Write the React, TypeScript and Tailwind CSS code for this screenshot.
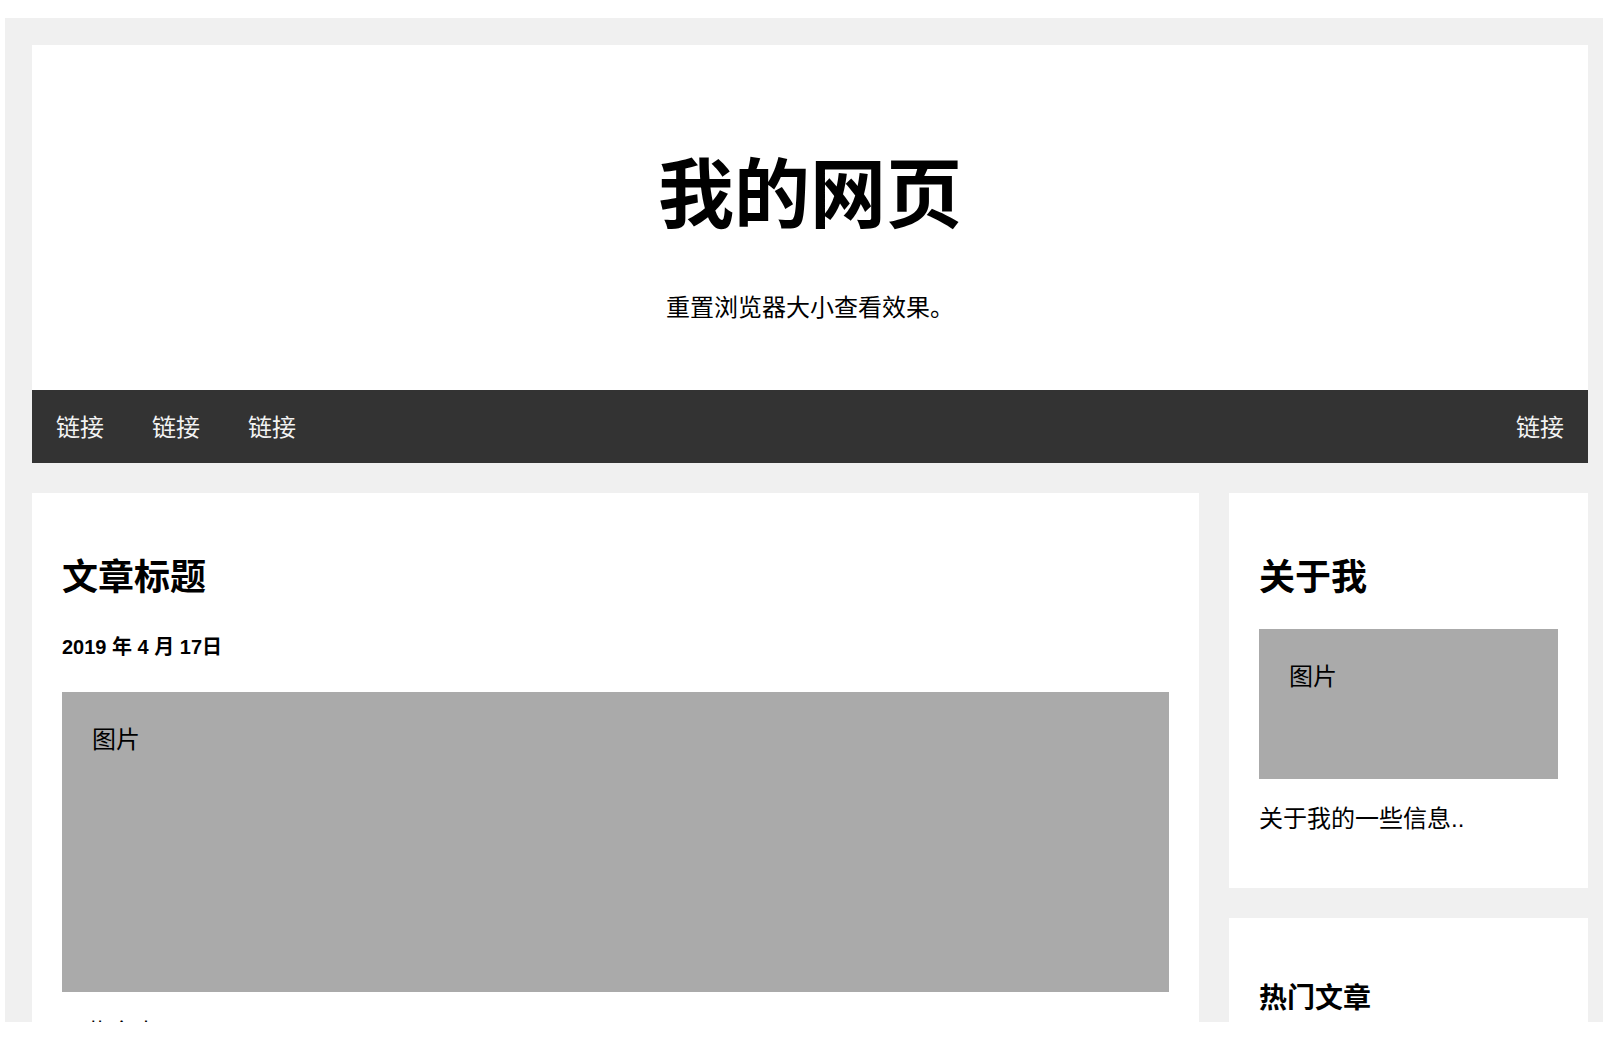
const font = "font-['Liberation_Sans','Noto_Sans_CJK_SC',sans-serif]";

function NavLink({ label }: { label: string }) {
  return (
    <a href="#" className="block px-[24px] pt-[2px] text-[24px] leading-[71px] text-[#f2f2f2]">
      {label}
    </a>
  );
}

function FakeImage({ height }: { height: string }) {
  return (
    <div className={`bg-[#aaaaaa] px-[30px] pt-[30px] ${height}`}>
      <p className="text-[24px] leading-[36px] text-black">图片</p>
    </div>
  );
}

export default function App() {
  return (
    <div className={`min-h-[1039px] w-full bg-white pt-[18px] pl-[5px] ${font}`}>
      {/* visible page viewport */}
      <div className="h-[1004px] overflow-hidden bg-[#f0f0f0] pl-[27px] pr-[15px] pt-[27px]">
        {/* Header */}
        <header className="bg-white pt-[106px] pb-[64px] text-center">
          <h1 className="text-[76px] leading-[90px] font-bold text-black">我的网页</h1>
          <p className="mt-[49px] text-[24px] leading-[36px] text-black">重置浏览器大小查看效果。</p>
        </header>

        {/* Top navigation */}
        <nav className="flex h-[73px] bg-[#333333]">
          <NavLink label="链接" />
          <NavLink label="链接" />
          <NavLink label="链接" />
          <div className="ml-auto">
            <NavLink label="链接" />
          </div>
        </nav>

        {/* Content row */}
        <div className="mt-[30px] flex items-start">
          {/* Left column */}
          <div className="w-3/4">
            <div className="bg-white px-[30px] pt-[30px] pb-[30px]">
              <h2 className="mt-[32px] text-[36px] leading-[45px] font-bold text-black">文章标题</h2>
              <h5 className="mt-[35px] text-[20px] leading-[24px] font-bold text-black">2019 年 4 月 17日</h5>
              <div className="mt-[33px]">
                <FakeImage height="h-[300px]" />
              </div>
              <p className="mt-[23px] text-[24px] leading-[36px] text-black">一些文本..</p>
            </div>
          </div>

          {/* Right column */}
          <div className="w-1/4 pl-[30px]">
            <div className="bg-white px-[30px] pt-[30px] pb-[51px]">
              <h2 className="mt-[32px] text-[36px] leading-[45px] font-bold text-black">关于我</h2>
              <div className="mt-[29px]">
                <FakeImage height="h-[150px]" />
              </div>
              <p className="mt-[22px] text-[24px] leading-[36px] text-black">关于我的一些信息..</p>
            </div>

            <div className="mt-[30px] bg-white px-[30px] pt-[30px] pb-[30px]">
              <h3 className="mt-[34px] text-[28px] leading-[34px] font-bold text-black">热门文章</h3>
            </div>
          </div>
        </div>
      </div>
    </div>
  );
}
